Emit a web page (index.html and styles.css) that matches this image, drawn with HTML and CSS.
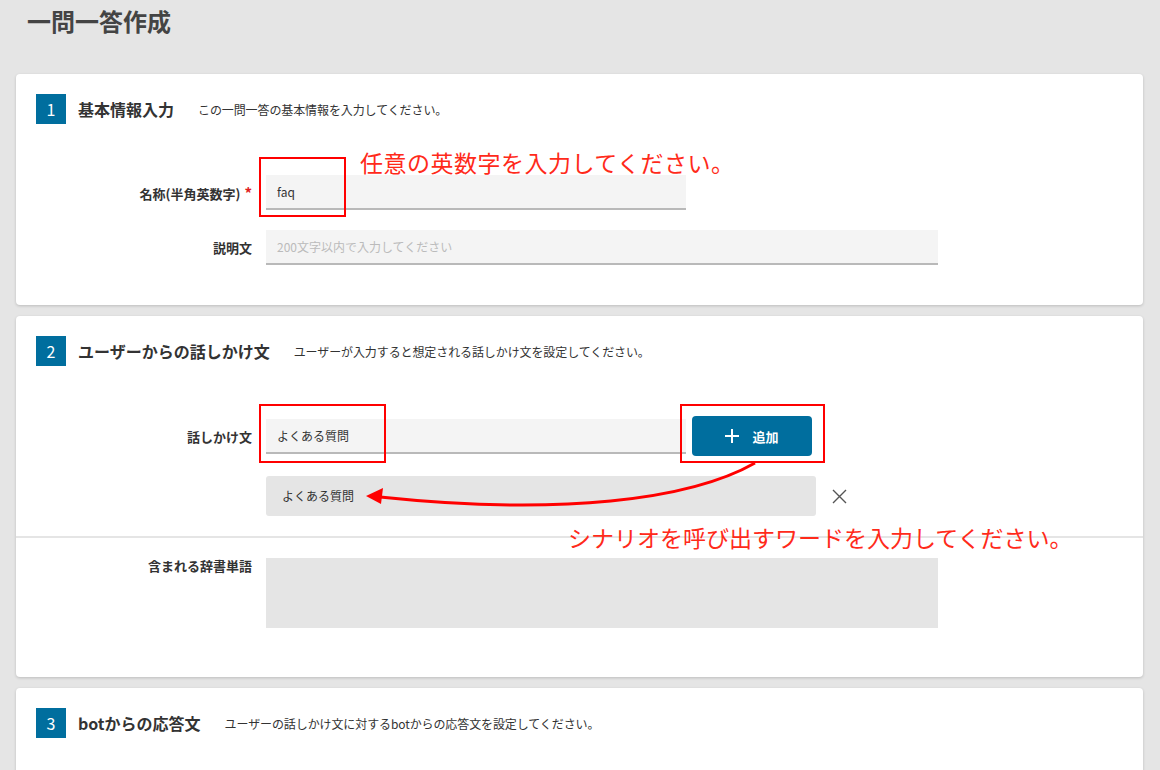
FILE: index.html
```html
<!doctype html>
<html>
<head>
<meta charset="utf-8">
<title>一問一答作成</title>
<link rel="stylesheet" href="styles.css">
</head>
<body>
<div class="page">
	<h1 class="page-title">一問一答作成</h1>

	<!-- 1 基本情報 -->
	<section class="card">
		<div class="card-in">
			<div class="card-head">
				<span class="step">1</span>
				<h2>基本情報入力</h2>
				<p>この一問一答の基本情報を入力してください。</p>
			</div>
			<div class="rows rows-basic">
				<div class="row">
					<label class="lbl">名称(半角英数字)<span class="req">*</span></label>
					<input class="txt txt-s" type="text" value="faq">
				</div>
				<div class="row">
					<label class="lbl">説明文</label>
					<input class="txt txt-l" type="text" placeholder="200文字以内で入力してください">
				</div>
			</div>
		</div>
		<div class="note-box nb1"></div>
		<div class="note-text nt1">任意の英数字を入力してください。</div>
	</section>

	<!-- 2 話しかけ文 -->
	<section class="card">
		<div class="card-in card-in-top">
			<div class="card-head">
				<span class="step">2</span>
				<h2>ユーザーからの話しかけ文</h2>
				<p>ユーザーが入力すると想定される話しかけ文を設定してください。</p>
			</div>
			<div class="rows rows-talk">
				<div class="row">
					<label class="lbl">話しかけ文</label>
					<input class="txt txt-s" type="text" value="よくある質問">
					<button class="btn-add"><svg width="14" height="14" viewBox="0 0 14 14"><path d="M7 0V14M0 7H14" stroke="#fff" stroke-width="2"/></svg>追加</button>
				</div>
				<div class="row">
					<span class="lbl"></span>
					<div class="chip">よくある質問</div>
					<svg class="del" width="15" height="15" viewBox="0 0 15 15"><path d="M1 1L14 14M14 1L1 14" stroke="#555" stroke-width="1.4"/></svg>
				</div>
			</div>
		</div>
		<div class="divider"></div>
		<div class="card-in card-in-bottom">
			<div class="row row-top">
				<label class="lbl">含まれる辞書単語</label>
				<div class="dict"></div>
			</div>
		</div>
		<div class="note-box nb2"></div>
		<div class="note-box nb3"></div>
		<svg class="note-arrow" width="420" height="70" viewBox="340 450 420 70">
			<path d="M755 463C690 500 560 516 380 497" fill="none" stroke="#f00" stroke-width="3"/>
			<path d="M366 496L383 488L381 504Z" fill="#f00"/>
		</svg>
		<div class="note-text nt2">シナリオを呼び出すワードを入力してください。</div>
	</section>

	<!-- 3 応答文 -->
	<section class="card">
		<div class="card-in">
			<div class="card-head">
				<span class="step">3</span>
				<h2>botからの応答文</h2>
				<p>ユーザーの話しかけ文に対するbotからの応答文を設定してください。</p>
			</div>
			<div class="rows-empty"></div>
		</div>
	</section>
</div>
</body>
</html>
```

FILE: styles.css
```css
*{ margin:0; padding:0; box-sizing:border-box}
body{ background:#e5e5e5; font-family:"Noto Sans CJK JP","Noto Sans",sans-serif; color:#333; overflow:hidden}
.page{ padding:0 17px 0 16px}
.page-title{ height:74px; padding:4px 0 0 11px; font-size:24px; line-height:34px; font-weight:bold; color:#444}

.card{ position:relative; background:#fff; border-radius:4px; box-shadow:0 1px 3px rgba(0,0,0,.18); margin-bottom:11px}
.card-in{ padding:20px 20px 40px}
.card-in-top{ padding-bottom:20px}
.card-in-bottom{ padding:20px 20px 49px}
.divider{ height:2px; background:#e5e5e5}

.card-head{ display:flex; align-items:center; height:30px}
.step{ width:30px; height:30px; background:#006e9e; color:#fff; font-size:16px; line-height:30px; text-align:center}
.card-head h2{ margin-left:12px; font-size:16px; font-weight:bold; color:#333}
.card-head p{ margin-left:24px; font-size:12px; color:#333; letter-spacing:-0.1px}

.rows{ display:flex; flex-direction:column; gap:20px}
.rows-basic{ margin-top:51px}
.rows-talk{ margin-top:50px}
.rows-empty{ height:60px}
.row{ display:flex; align-items:center}
.row-top{ align-items:flex-start}
.lbl{ width:216px; flex:none; margin-right:14px; text-align:right; font-size:13px; font-weight:bold; color:#333}
.row-top .lbl{ line-height:16px}
.req{ color:#e02020; margin-left:4px; font-size:15px; font-weight:bold}

.txt{ height:35px; border:none; border-bottom:2px solid #b9b9b9; background:#f4f4f4; padding:0 11px; font-family:inherit; font-size:12px; color:#333; outline:none}
.txt::placeholder{ color:#bbb}
.txt-s{ width:420px}
.txt-l{ width:672px}

.btn-add{ display:flex; align-items:center; justify-content:center; gap:13px; width:120px; height:40px; margin-left:6px; background:#006e9e; border:none; border-radius:4px; color:#fff; font-family:inherit; font-size:13px; font-weight:bold}
.chip{ width:550px; height:40px; line-height:40px; padding-left:16px; background:#e5e5e5; border-radius:3px; font-size:12px; color:#333}
.del{ margin-left:16px}
.dict{ width:672px; height:70px; background:#e5e5e5}

/* 注釈 */
.note-box{ position:absolute; border:2px solid #f00}
.nb1{ left:243px; top:83px; width:87px; height:60px}
.nb2{ left:243px; top:88px; width:127px; height:59px}
.nb3{ left:664px; top:88px; width:145px; height:59px}
.note-text{ position:absolute; color:#ff2a1a; font-size:23px; line-height:30px; white-space:nowrap}
.nt1{ left:344px; top:73px; letter-spacing:0.5px}
.nt2{ left:552px; top:206px}
.note-arrow{ position:absolute; left:324px; top:134px}
```
